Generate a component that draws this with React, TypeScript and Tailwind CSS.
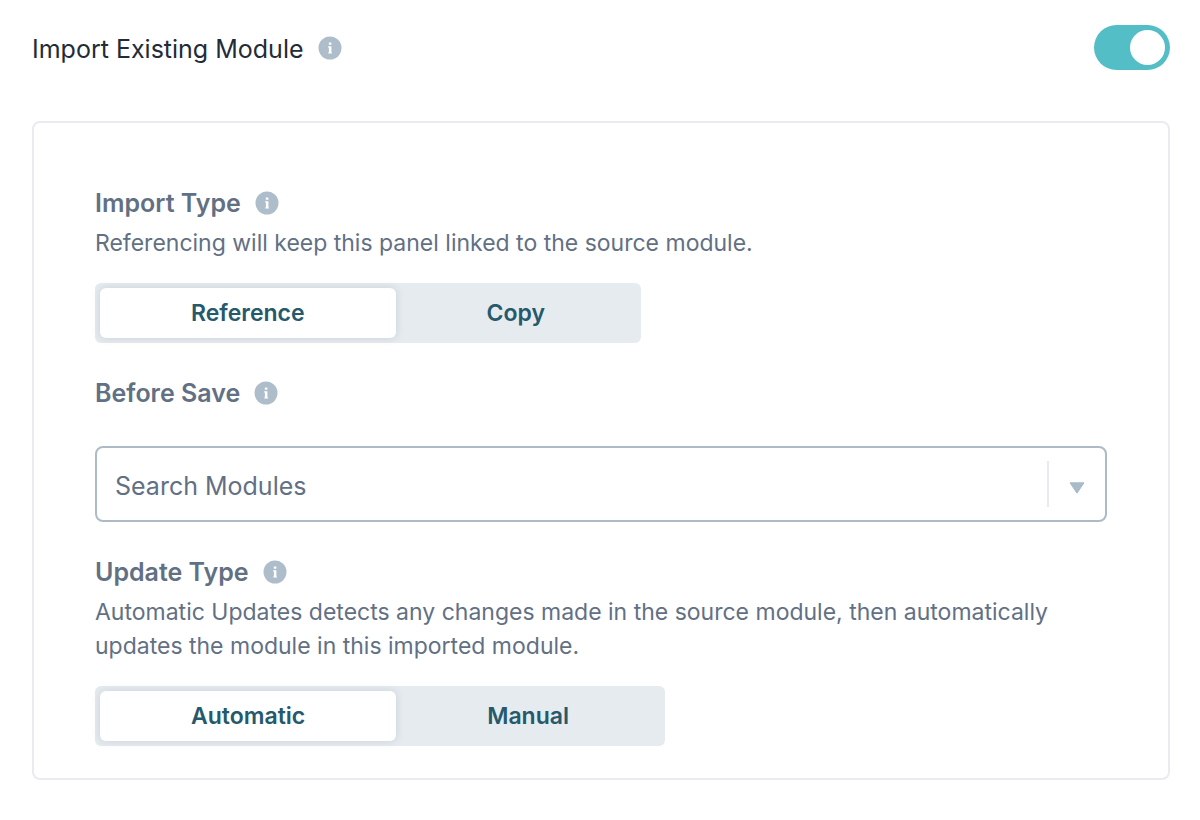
import { useState, type ReactElement } from "react";

type InfoButtonProps = {
  readonly label: string;
};

function InfoButton({ label }: InfoButtonProps): ReactElement {
  return (
    <button type="button" aria-label={label} className="shrink-0 rounded-full">
      <svg viewBox="0 0 24 24" className="size-6" aria-hidden="true">
        <circle cx="12" cy="12" r="11.5" fill="#aebdca" />
        <rect x="10.8" y="6.4" width="2.6" height="2.3" rx="0.4" fill="#fff" />
        <path d="M10.1 10.2h3.3v6.2h.6v1.2h-3.8v-1.2h.7v-4.9h-.8z" fill="#fff" />
      </svg>
    </button>
  );
}

type SegmentedProps = {
  readonly name: string;
  readonly label: string;
  readonly options: readonly string[];
  readonly value: string;
  readonly onChange: (value: string) => void;
};

function Segmented({
  name,
  label,
  options,
  value,
  onChange,
}: SegmentedProps): ReactElement {
  return (
    <div
      role="radiogroup"
      aria-label={label}
      className="mt-[23px] flex w-fit rounded-md bg-[#e6ebef] p-[5px]"
    >
      {options.map((option) => (
        <label
          key={option}
          className="relative flex h-[50px] cursor-pointer items-center rounded-md px-[91px] text-[23px] font-semibold text-[#25596b] has-checked:bg-white has-checked:shadow-[0_0_8px_rgba(80,90,130,0.18)]"
        >
          <input
            type="radio"
            name={name}
            value={option}
            checked={option === value}
            onChange={() => onChange(option)}
            className="sr-only"
          />
          {option}
        </label>
      ))}
    </div>
  );
}

type HeadingProps = {
  readonly title: string;
  readonly htmlFor?: string;
};

function Heading({ title, htmlFor }: HeadingProps): ReactElement {
  return (
    <div className="flex h-8 items-center gap-[14px]">
      <h2 className="text-[25px] leading-8 font-semibold">
        {htmlFor ? <label htmlFor={htmlFor}>{title}</label> : title}
      </h2>
      <InfoButton label={`About ${title}`} />
    </div>
  );
}

export default function App(): ReactElement {
  const [enabled, setEnabled] = useState(true);
  const [importType, setImportType] = useState("Reference");
  const [updateType, setUpdateType] = useState("Automatic");
  const [query, setQuery] = useState("");

  return (
    <main className="min-h-screen bg-white pt-[25px] pr-[30px] pb-10 pl-8 font-['Inter',sans-serif] text-[#627084]">
      <header className="flex h-[45px] items-center justify-between">
        <div className="flex items-center gap-[14px]">
          <label
            htmlFor="import-existing"
            className="pt-[2px] text-[25px] leading-8 text-[#232b38]"
          >
            Import Existing Module
          </label>
          <InfoButton label="About Import Existing Module" />
        </div>
        <input
          id="import-existing"
          type="checkbox"
          role="switch"
          checked={enabled}
          onChange={(e) => setEnabled(e.target.checked)}
          className="flex h-[45px] w-[76px] cursor-pointer appearance-none items-center rounded-full bg-[#aebdca] px-[5px] before:size-[35px] before:rounded-full before:bg-white checked:justify-end checked:bg-[#54bec6]"
        />
      </header>

      {enabled && (
        <div className="mt-[51px] rounded-lg border-2 border-[#e8ebef] px-[61px] pt-16 pb-8">
          <section>
            <Heading title="Import Type" />
            <p className="mt-[7px] text-[23px] leading-[34px]">
              Referencing will keep this panel linked to the source module.
            </p>
            <Segmented
              name="import-type"
              label="Import Type"
              options={["Reference", "Copy"]}
              value={importType}
              onChange={setImportType}
            />
          </section>

          <section className="mt-[34px]">
            <Heading title="Before Save" htmlFor="module-search" />
            <div className="mt-[37px] flex h-[76px] items-center rounded-lg border-2 border-[#aebbc7]">
              <input
                id="module-search"
                type="text"
                role="combobox"
                aria-expanded="false"
                aria-controls="module-list"
                placeholder="Search Modules"
                value={query}
                onChange={(e) => setQuery(e.target.value)}
                className="h-full min-w-0 flex-1 bg-transparent pt-1 pl-[18px] text-[25px] outline-none placeholder:text-[#627084]"
              />
              <div className="h-[46px] w-[2px] bg-[#e6ebef]" />
              <button
                type="button"
                aria-label="Show modules"
                className="flex h-full w-14 items-center justify-center pt-[7px]"
              >
                <svg viewBox="0 0 16 12" className="h-3 w-4" aria-hidden="true">
                  <path
                    d="M1 .8h14L8 11.2z"
                    fill="#a9bac8"
                    stroke="#a9bac8"
                    strokeLinejoin="round"
                  />
                </svg>
              </button>
            </div>
          </section>

          <section className="mt-[34px]">
            <Heading title="Update Type" />
            <p className="mt-[7px] text-[23px] leading-[34px]">
              Automatic Updates detects any changes made in the source module,
              then automatically updates the module in this imported module.
            </p>
            <Segmented
              name="update-type"
              label="Update Type"
              options={["Automatic", "Manual"]}
              value={updateType}
              onChange={setUpdateType}
            />
          </section>
        </div>
      )}
    </main>
  );
}
